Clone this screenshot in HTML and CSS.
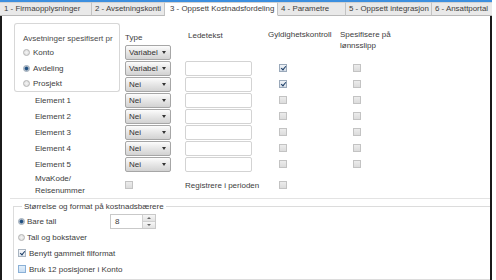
FILE: index.html
```html
<!DOCTYPE html>
<html lang="no">
<head>
    <meta charset="UTF-8" />
    <title>Oppsett Kostnadsfordeling</title>
    <link rel="stylesheet" href="styles.css">
</head>
<body>
    <div class="window">
        <div class="tabs">
            <div class="tab t1">1 - Firmaopplysninger</div>
            <div class="tab t2">2 - Avsetningskonti</div>
            <div class="tab t3 active">3 - Oppsett Kostnadsfordeling</div>
            <div class="tab t4">4 - Parametre</div>
            <div class="tab t5">5 - Oppsett integrasjon</div>
            <div class="tab t6">6 - Ansattportal</div>
        </div>

        <div class="page">
            <div class="setup">
                <!-- header -->
                <div class="grp grp-top">Avsetninger spesifisert pr</div>
                <div class="h h-type">Type</div>
                <div class="h h-led">Ledetekst</div>
                <div class="h h-gyl">Gyldighetskontroll</div>
                <div class="h h-los">Spesifisere på<br>lønnsslipp</div>

                <!-- Konto -->
                <div class="grp opt"><span class="radio"></span>Konto</div>
                <div><div class="select">Variabel<span class="caret"></span></div></div>
                <div></div>
                <div></div>
                <div></div>

                <!-- Avdeling -->
                <div class="grp opt"><span class="radio on"></span>Avdeling</div>
                <div><div class="select">Variabel<span class="caret"></span></div></div>
                <div><div class="field"></div></div>
                <div class="c-gyl"><span class="check on"></span></div>
                <div class="c-los"><span class="check"></span></div>

                <!-- Prosjekt -->
                <div class="grp grp-bot opt"><span class="radio"></span>Prosjekt</div>
                <div><div class="select">Nei<span class="caret"></span></div></div>
                <div><div class="field"></div></div>
                <div class="c-gyl"><span class="check on"></span></div>
                <div class="c-los"><span class="check"></span></div>

                <div class="lbl">Element 1</div>
                <div><div class="select">Nei<span class="caret"></span></div></div>
                <div><div class="field"></div></div>
                <div class="c-gyl"><span class="check"></span></div>
                <div class="c-los"><span class="check"></span></div>

                <div class="lbl">Element 2</div>
                <div><div class="select">Nei<span class="caret"></span></div></div>
                <div><div class="field"></div></div>
                <div class="c-gyl"><span class="check"></span></div>
                <div class="c-los"><span class="check"></span></div>

                <div class="lbl">Element 3</div>
                <div><div class="select">Nei<span class="caret"></span></div></div>
                <div><div class="field"></div></div>
                <div class="c-gyl"><span class="check"></span></div>
                <div class="c-los"><span class="check"></span></div>

                <div class="lbl">Element 4</div>
                <div><div class="select">Nei<span class="caret"></span></div></div>
                <div><div class="field"></div></div>
                <div class="c-gyl"><span class="check"></span></div>
                <div class="c-los"><span class="check"></span></div>

                <div class="lbl">Element 5</div>
                <div><div class="select">Nei<span class="caret"></span></div></div>
                <div><div class="field"></div></div>
                <div class="c-gyl"><span class="check"></span></div>
                <div class="c-los"><span class="check"></span></div>

                <!-- MvaKode -->
                <div class="lbl lbl-two">MvaKode/<br>Reisenummer</div>
                <div class="c-mva"><span class="check"></span></div>
                <div class="reg">Registrere i perioden</div>
                <div class="c-gyl"><span class="check"></span></div>
                <div></div>
            </div>

            <fieldset class="format">
                <legend>Størrelse og format på kostnadsbærere</legend>
                <div class="frow">
                    <span class="radio on"></span>
                    <span class="flabel">Bare tall</span>
                    <div class="spin">
                        <span class="spin-val">8</span>
                        <span class="spin-btns">
                            <span class="spin-btn"><span class="up"></span></span>
                            <span class="spin-btn"><span class="down"></span></span>
                        </span>
                    </div>
                </div>
                <div class="frow"><span class="radio"></span>Tall og bokstaver</div>
                <div class="frow"><span class="check box on"></span>Benytt gammelt filformat</div>
                <div class="frow"><span class="check box hover"></span>Bruk 12 posisjoner i Konto</div>
            </fieldset>
        </div>
    </div>
</body>
</html>
```

FILE: styles.css
```css
* {
    box-sizing: border-box;
}

body {
    margin: 0;
    background-color: #fff;
    font-family: "Liberation Sans", Arial, sans-serif;
    font-size: 8px;
    color: #3d3d3d;
}

.window {
    width: 492px;
    height: 280px;
    border-top: 2px solid #3c8fdf;
    display: flex;
    flex-direction: column;
    overflow: hidden;
}

/* tabs */
.tabs {
    display: flex;
    flex: none;
    height: 14px;
    background-color: #f2f2f2;
}

.tab {
    flex: none;
    padding: 0 0 0 3px;
    font-size: 7.9px;
    line-height: 12px;
    white-space: nowrap;
    overflow: hidden;
    background-color: #e9e9e9;
    border-top: 1px solid #d2d2d2;
    border-right: 1px solid #c3c3c3;
    border-bottom: 1px solid #b9b9b9;
}

.tab.active {
    background-color: #fff;
    border-bottom-color: #fff;
    padding-left: 5px;
}

.t1 { width: 92px; padding-left: 4px; }
.t2 { width: 73px; }
.t3 { width: 113px; }
.t4 { width: 68px; }
.t5 { width: 86px; }
.t6 { flex: 1; border-right: none; }

.page {
    flex: 1;
    border-left: 2px solid #1b1b1b;
    border-right: 2px solid #1b1b1b;
    padding: 7px 0 0 8px;
}

/* upper grid */
.setup {
    display: grid;
    grid-template-columns: 111px 60px 80px 75px 1fr;
    grid-template-rows: 21px repeat(8, 16px) 26px;
    padding-left: 4px;
    border-bottom: 1px solid #e3e3e3;
}

.setup > div {
    display: flex;
    align-items: center;
    white-space: nowrap;
}

.setup > .h {
    align-items: flex-start;
    line-height: 11px;
}

.h-type { padding-top: 9px; }
.h-led { padding: 7px 0 0 3px; }
.h-gyl { padding: 6px 0 0 3px; }
.h-los { padding-top: 6px; }

.grp {
    width: 106px;
    border-left: 1px solid #d7d7d7;
    border-right: 1px solid #d7d7d7;
}

.setup > .grp-top {
    align-items: flex-start;
    padding: 9px 0 0 8px;
    line-height: 11px;
    border-top: 1px solid #d7d7d7;
    border-radius: 3px 3px 0 0;
    color: #4a4a4a;
}

.grp-bot {
    border-bottom: 1px solid #d7d7d7;
    border-radius: 0 0 3px 3px;
}

.opt {
    padding-left: 8px;
    gap: 3px;
}

.lbl {
    padding-left: 21px;
}

.setup > .lbl-two {
    line-height: 12px;
}

.reg {
    grid-column: 3;
}

.c-gyl { padding-left: 14px; }
.c-los { padding-left: 13px; }

/* controls */
.select {
    width: 46px;
    height: 15px;
    display: flex;
    align-items: center;
    padding-left: 3px;
    border: 1px solid #a6a6a6;
    border-radius: 2px;
    background: linear-gradient(#fcfcfc, #e6e6e6 50%, #d2d2d2);
    color: #333;
}

.caret {
    margin-left: auto;
    margin-right: 4px;
    border-left: 2.5px solid transparent;
    border-right: 2.5px solid transparent;
    border-top: 3px solid #333;
}

.field {
    width: 67px;
    height: 15px;
    border: 1px solid #d3d3d3;
    border-radius: 2px;
    background-color: #fff;
}

.radio {
    width: 7px;
    height: 7px;
    flex: none;
    border-radius: 50%;
    border: 1px solid #b3b3b3;
    background: radial-gradient(#f4f4f4, #d9d9d9);
}

.radio.on {
    background: radial-gradient(#1f4f80 35%, #7b95b3 55%, #d9d9d9 70%);
    border-color: #98a6b5;
}

.check {
    display: inline-block;
    width: 8px;
    height: 8px;
    flex: none;
    border: 1px solid #c3c3c3;
    background: linear-gradient(#ececec, #dcdcdc);
    position: relative;
}

.check.on {
    border-color: #9aa9ba;
    background: linear-gradient(#eef2f6, #d6dee8);
}

.check.on::after {
    content: "";
    position: absolute;
    left: 2px;
    top: 0;
    width: 2px;
    height: 4px;
    border-right: 1.5px solid #1c3d66;
    border-bottom: 1.5px solid #1c3d66;
    transform: rotate(40deg);
}

.check.box {
    background: #fff;
    border-color: #a9b4c0;
}

.check.box.on {
    background: linear-gradient(#f6f8fb, #e3e9f0);
}

.check.hover {
    border-color: #8ab0d6;
    background: linear-gradient(#e3effa, #c9def3);
}

/* lower group */
.format {
    margin: 2px 0 0 3px;
    padding: 1px 0 0 4px;
    border: 1px solid #dcdcdc;
    border-right: none;
    height: 79px;
}

.format legend {
    padding: 0 2px;
    margin-left: 4px;
    line-height: 11px;
}

.frow {
    display: flex;
    align-items: center;
    gap: 2px;
    height: 16px;
    white-space: nowrap;
}

.frow .check {
    margin-right: 1px;
}

.flabel {
    width: 81px;
}

.spin {
    width: 46px;
    height: 15px;
    display: flex;
    border: 1px solid #c9c9c9;
    background-color: #fff;
}

.spin-val {
    flex: 1;
    padding-left: 4px;
    line-height: 13px;
}

.spin-btns {
    width: 13px;
    display: flex;
    flex-direction: column;
    border-left: 1px solid #d0d0d0;
}

.spin-btn {
    flex: 1;
    display: flex;
    align-items: center;
    justify-content: center;
    background: linear-gradient(#f7f7f7, #e2e2e2);
    border-bottom: 1px solid #d0d0d0;
}

.spin-btn:last-child {
    border-bottom: none;
}

.up,
.down {
    border-left: 2px solid transparent;
    border-right: 2px solid transparent;
}

.up { border-bottom: 2px solid #666; }
.down { border-top: 2px solid #666; }
```
